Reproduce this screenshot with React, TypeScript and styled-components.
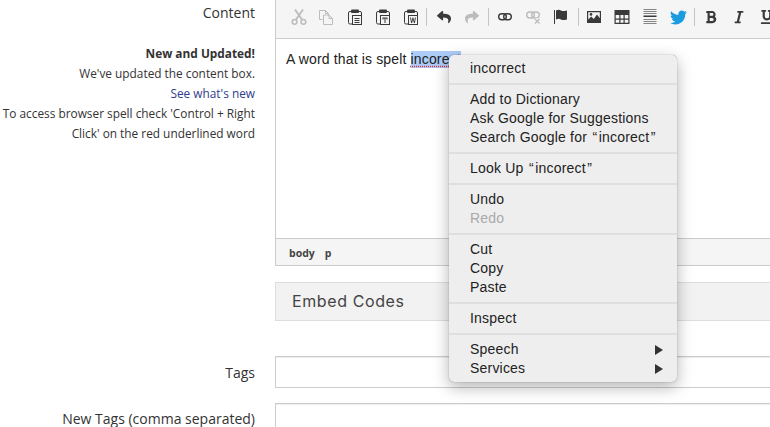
import React from 'react';
import styled, { createGlobalStyle } from 'styled-components';
import { FaBold, FaItalic, FaReply, FaShare, FaTwitter, FaUnderline } from 'react-icons/fa';

const GlobalStyle = createGlobalStyle`
  html, body {
    margin: 0;
    padding: 0;
    width: 770px;
    height: 427px;
    overflow: hidden;
    background: #fff;
  }
`;

const Page = styled.div`
  position: relative;
  width: 770px;
  height: 427px;
  overflow: hidden;
  font-family: 'Open Sans', sans-serif;
  color: #333;
`;

const FormRow = styled.div<{ $gap?: number }>`
  display: grid;
  grid-template-columns: 255px 600px;
  column-gap: 20px;
  margin-bottom: ${(p) => p.$gap ?? 0}px;
`;

const Label = styled.div<{ $top?: number }>`
  text-align: right;
  font-size: 14px;
  line-height: 20px;
  padding-top: ${(p) => p.$top ?? 0}px;
  color: #333;
`;

const Help = styled.div`
  margin-top: 20px;
  text-align: right;
  font-size: 11.85px;
  line-height: 20px;
  color: #333;
`;

const HelpTitle = styled.div`
  font-weight: 700;
`;

const HelpLink = styled.a`
  display: block;
  color: #2f3c8c;
  text-decoration: none;
`;

const Editor = styled.div`
  border-left: 1px solid #ccc;
  border-bottom: 1px solid #ccc;
  height: 266px;
  display: flex;
  flex-direction: column;
  box-sizing: border-box;
`;

const Toolbar = styled.div`
  flex: 0 0 39px;
  box-sizing: border-box;
  display: flex;
  align-items: center;
  padding: 0 0 4px 9px;
  background: #f5f5f5;
  border-bottom: 1px solid #ccc;
`;

const ToolButton = styled.div<{ $off?: boolean }>`
  flex: 0 0 28px;
  height: 28px;
  display: flex;
  align-items: center;
  justify-content: center;
  color: ${(p) => (p.$off ? '#bcbcbc' : '#3a3a3a')};
`;

const Separator = styled.div<{ $left: number; $right: number }>`
  flex: 0 0 1px;
  height: 18px;
  background: #c4c4c4;
  margin: 0 ${(p) => p.$right}px 0 ${(p) => p.$left}px;
`;

const Body = styled.div`
  flex: 1;
  padding: 10px;
  font-family: 'Liberation Sans', Arial, sans-serif;
  font-size: 14px;
  line-height: 20px;
  letter-spacing: 0.15px;
  color: #222;
`;

const Misspelt = styled.span`
  background: #accdf8;
  text-decoration: underline dotted #e0303a;
  text-underline-offset: 2px;
  padding-bottom: 1px;
`;

const StatusBar = styled.div`
  flex: 0 0 27px;
  box-sizing: border-box;
  display: flex;
  align-items: center;
  gap: 10px;
  padding: 2px 0 0 13px;
  background: #f5f5f5;
  border-top: 1px solid #ccc;
  font-size: 10.5px;
  font-weight: 700;
  color: #444;
`;

const Section = styled.div`
  height: 39px;
  box-sizing: border-box;
  display: flex;
  align-items: center;
  padding: 0 0 2px 16px;
  background: #f2f2f2;
  border: 1px solid #ddd;
  font-family: Inter, sans-serif;
  font-size: 16px;
  letter-spacing: 0.6px;
  color: #444;
`;

const Input = styled.div<{ $height: number }>`
  height: ${(p) => p.$height}px;
  box-sizing: border-box;
  border: 1px solid #ccc;
  background: #fff;
  box-shadow: inset 0 1px 1px rgba(0, 0, 0, 0.075);
`;

const Menu = styled.div`
  position: absolute;
  left: 449px;
  top: 55px;
  width: 228px;
  height: 327px;
  box-sizing: border-box;
  padding: 4px 0;
  background: #eee;
  border-radius: 5px;
  box-shadow: 0 0 1px rgba(0, 0, 0, 0.5), 0 5px 16px rgba(0, 0, 0, 0.3);
  font-family: 'Liberation Sans', Arial, sans-serif;
  font-size: 14px;
  letter-spacing: 0.2px;
  color: #222;
`;

const MenuItem = styled.div<{ $off?: boolean }>`
  height: 19px;
  line-height: 19px;
  padding: 0 14px 0 21px;
  display: flex;
  align-items: center;
  justify-content: space-between;
  color: ${(p) => (p.$off ? '#a9a9a9' : '#222')};
`;

const MenuLine = styled.div`
  height: 2px;
  margin: 5px 0;
  background: #dfdfdf;
`;

const Quote = styled.span`
  padding: 0 1.35px;
`;

const Arrow = styled.span`
  flex: none;
  width: 0;
  height: 0;
  border-left: 8.5px solid #333;
  border-top: 5px solid transparent;
  border-bottom: 5px solid transparent;
`;

const Glyph: React.FC<{ children: React.ReactNode }> = ({ children }) => (
  <svg width="16" height="16" viewBox="0 0 16 16" fill="currentColor">
    {children}
  </svg>
);

const Clip: React.FC<{ children: React.ReactNode }> = ({ children }) => (
  <Glyph>
    <path
      d="M4 2.500H3A1.500 1.500 0 0 0 1.500 4v9.500A1.500 1.500 0 0 0 3 15h3M12 2.500h1A1.500 1.500 0 0 1 14.500 4v2"
      fill="none"
      stroke="currentColor"
    />
    <rect x="4" y="0.500" width="8" height="3.500" rx="1" />
    <rect x="5.500" y="6.500" width="9" height="9" fill="#f5f5f5" stroke="currentColor" />
    {children}
  </Glyph>
);

const icons = {
  cut: (
    <Glyph>
      <path d="M4 0.500l7.300 10.500M12 0.500L4.700 11" fill="none" stroke="currentColor" strokeWidth="1.8" />
      <circle cx="3.600" cy="12.800" r="2.400" fill="none" stroke="currentColor" strokeWidth="1.500" />
      <circle cx="12.400" cy="12.800" r="2.400" fill="none" stroke="currentColor" strokeWidth="1.500" />
    </Glyph>
  ),
  copy: (
    <Glyph>
      <path d="M0.500 1.500h6l3 3v3M6.500 1.500v3h3M0.500 1.500v9h3" fill="none" stroke="currentColor" />
      <path d="M4.500 6h5.500l3.500 3.500V15.500h-9zM10 6v3.500h3.500" fill="#f5f5f5" stroke="currentColor" />
    </Glyph>
  ),
  paste: (
    <Clip>
      <path d="M7.500 9h5v1h-5zM7.500 11h5v1h-5zM7.500 13h5v1h-5z" />
    </Clip>
  ),
  pasteText: (
    <Clip>
      <path d="M7.500 8.500h5v2h-1v-1h-1v4.500h-1V9.500h-1v1h-1z" />
    </Clip>
  ),
  pasteWord: (
    <Clip>
      <path d="M7 8.500h1l.6 4 .9-4h.9l.9 4 .6-4h1l-1 5.500h-1L10 10.500 9.100 14h-1z" />
    </Clip>
  ),
  link: (
    <Glyph>
      <rect x="1.700" y="4.700" width="7.600" height="6" rx="3" fill="none" stroke="currentColor" strokeWidth="1.400" />
      <rect x="6.700" y="4.700" width="7.600" height="6" rx="3" fill="none" stroke="currentColor" strokeWidth="1.400" />
    </Glyph>
  ),
  unlink: (
    <Glyph>
      <rect x="1.700" y="3" width="7.600" height="6" rx="3" fill="none" stroke="currentColor" strokeWidth="1.400" />
      <rect x="6.700" y="3" width="7.600" height="6" rx="3" fill="none" stroke="currentColor" strokeWidth="1.400" />
      <path d="M10 10l4.500 4.500M14.500 10L10 14.500" fill="none" stroke="#f5f5f5" strokeWidth="3.400" />
      <path d="M10 10l4.500 4.500M14.500 10L10 14.500" fill="none" stroke="currentColor" strokeWidth="1.200" />
    </Glyph>
  ),
  flag: (
    <Glyph>
      <path d="M1 1h1v14H1z" />
      <path d="M3 1.500c2-.9 3.500-.9 5 0s3 .7 6 0v9c-3 .7-4.500.9-6 0s-3-.9-5 0z" />
    </Glyph>
  ),
  image: (
    <Glyph>
      <path fillRule="evenodd" d="M1 2h14v12H1zM2.200 3.200v7.300l3-3 2.500 2.500 3.300-4.500 2.800 3.800V3.200z" />
      <circle cx="5" cy="5.400" r="1.300" />
    </Glyph>
  ),
  table: (
    <Glyph>
      <path
        fillRule="evenodd"
        d="M0.500 1h15v14h-15zM1.700 6v3.500h3.600V6zM6.500 6v3.500h3V6zM10.700 6v3.500h3.600V6zM1.700 10.700v3.100h3.600v-3.100zM6.500 10.700v3.100h3v-3.100zM10.700 10.700v3.100h3.600v-3.100z"
      />
    </Glyph>
  ),
  hr: (
    <Glyph>
      <path d="M1.500 0h13v1h-13zM1.500 2h13v1h-13zM1.500 4h13v1h-13z" opacity="0.6" />
      <path d="M1.500 6.500h13v1.500h-13z" />
      <path d="M1.500 10h13v1h-13zM1.500 12h13v1h-13zM1.500 14h13v1h-13z" opacity="0.6" />
    </Glyph>
  ),
};

const App: React.FC = () => (
  <Page>
    <GlobalStyle />
    <FormRow $gap={16}>
      <div>
        <Label $top={3}>Content</Label>
        <Help>
          <HelpTitle>New and Updated!</HelpTitle>
          <div>We've updated the content box.</div>
          <HelpLink>See what's new</HelpLink>
          <div>To access browser spell check 'Control + Right Click' on the red underlined word</div>
        </Help>
      </div>
      <Editor>
        <Toolbar>
          <ToolButton $off>{icons.cut}</ToolButton>
          <ToolButton $off>{icons.copy}</ToolButton>
          <ToolButton>{icons.paste}</ToolButton>
          <ToolButton>{icons.pasteText}</ToolButton>
          <ToolButton>{icons.pasteWord}</ToolButton>
          <Separator $left={1} $right={3} />
          <ToolButton>
            <FaReply size={14} />
          </ToolButton>
          <ToolButton $off>
            <FaShare size={14} />
          </ToolButton>
          <Separator $left={2} $right={2} />
          <ToolButton>{icons.link}</ToolButton>
          <ToolButton $off>{icons.unlink}</ToolButton>
          <ToolButton>{icons.flag}</ToolButton>
          <Separator $left={3} $right={1} />
          <ToolButton>{icons.image}</ToolButton>
          <ToolButton>{icons.table}</ToolButton>
          <ToolButton>{icons.hr}</ToolButton>
          <ToolButton>
            <FaTwitter size={17} color="#1b9be0" />
          </ToolButton>
          <Separator $left={2} $right={2} />
          <ToolButton>
            <FaBold size={14} />
          </ToolButton>
          <ToolButton>
            <FaItalic size={14} />
          </ToolButton>
          <ToolButton>
            <FaUnderline size={14} />
          </ToolButton>
        </Toolbar>
        <Body>
          A word that is spelt <Misspelt>incorect</Misspelt>
        </Body>
        <StatusBar>
          <span>body</span>
          <span>p</span>
        </StatusBar>
      </Editor>
    </FormRow>
    <FormRow $gap={35}>
      <div />
      <Section>Embed Codes</Section>
    </FormRow>
    <FormRow $gap={15}>
      <Label $top={7}>Tags</Label>
      <Input $height={32} />
    </FormRow>
    <FormRow>
      <Label $top={6}>New Tags (comma separated)</Label>
      <Input $height={60} />
    </FormRow>
    <Menu>
      <MenuItem>incorrect</MenuItem>
      <MenuLine />
      <MenuItem>Add to Dictionary</MenuItem>
      <MenuItem>Ask Google for Suggestions</MenuItem>
      <MenuItem>
        <span>
          Search Google for <Quote>“</Quote>incorect<Quote>”</Quote>
        </span>
      </MenuItem>
      <MenuLine />
      <MenuItem>
        <span>
          Look Up <Quote>“</Quote>incorect<Quote>”</Quote>
        </span>
      </MenuItem>
      <MenuLine />
      <MenuItem>Undo</MenuItem>
      <MenuItem $off>Redo</MenuItem>
      <MenuLine />
      <MenuItem>Cut</MenuItem>
      <MenuItem>Copy</MenuItem>
      <MenuItem>Paste</MenuItem>
      <MenuLine />
      <MenuItem>Inspect</MenuItem>
      <MenuLine />
      <MenuItem>
        Speech
        <Arrow />
      </MenuItem>
      <MenuItem>
        Services
        <Arrow />
      </MenuItem>
    </Menu>
  </Page>
);

export default App;
